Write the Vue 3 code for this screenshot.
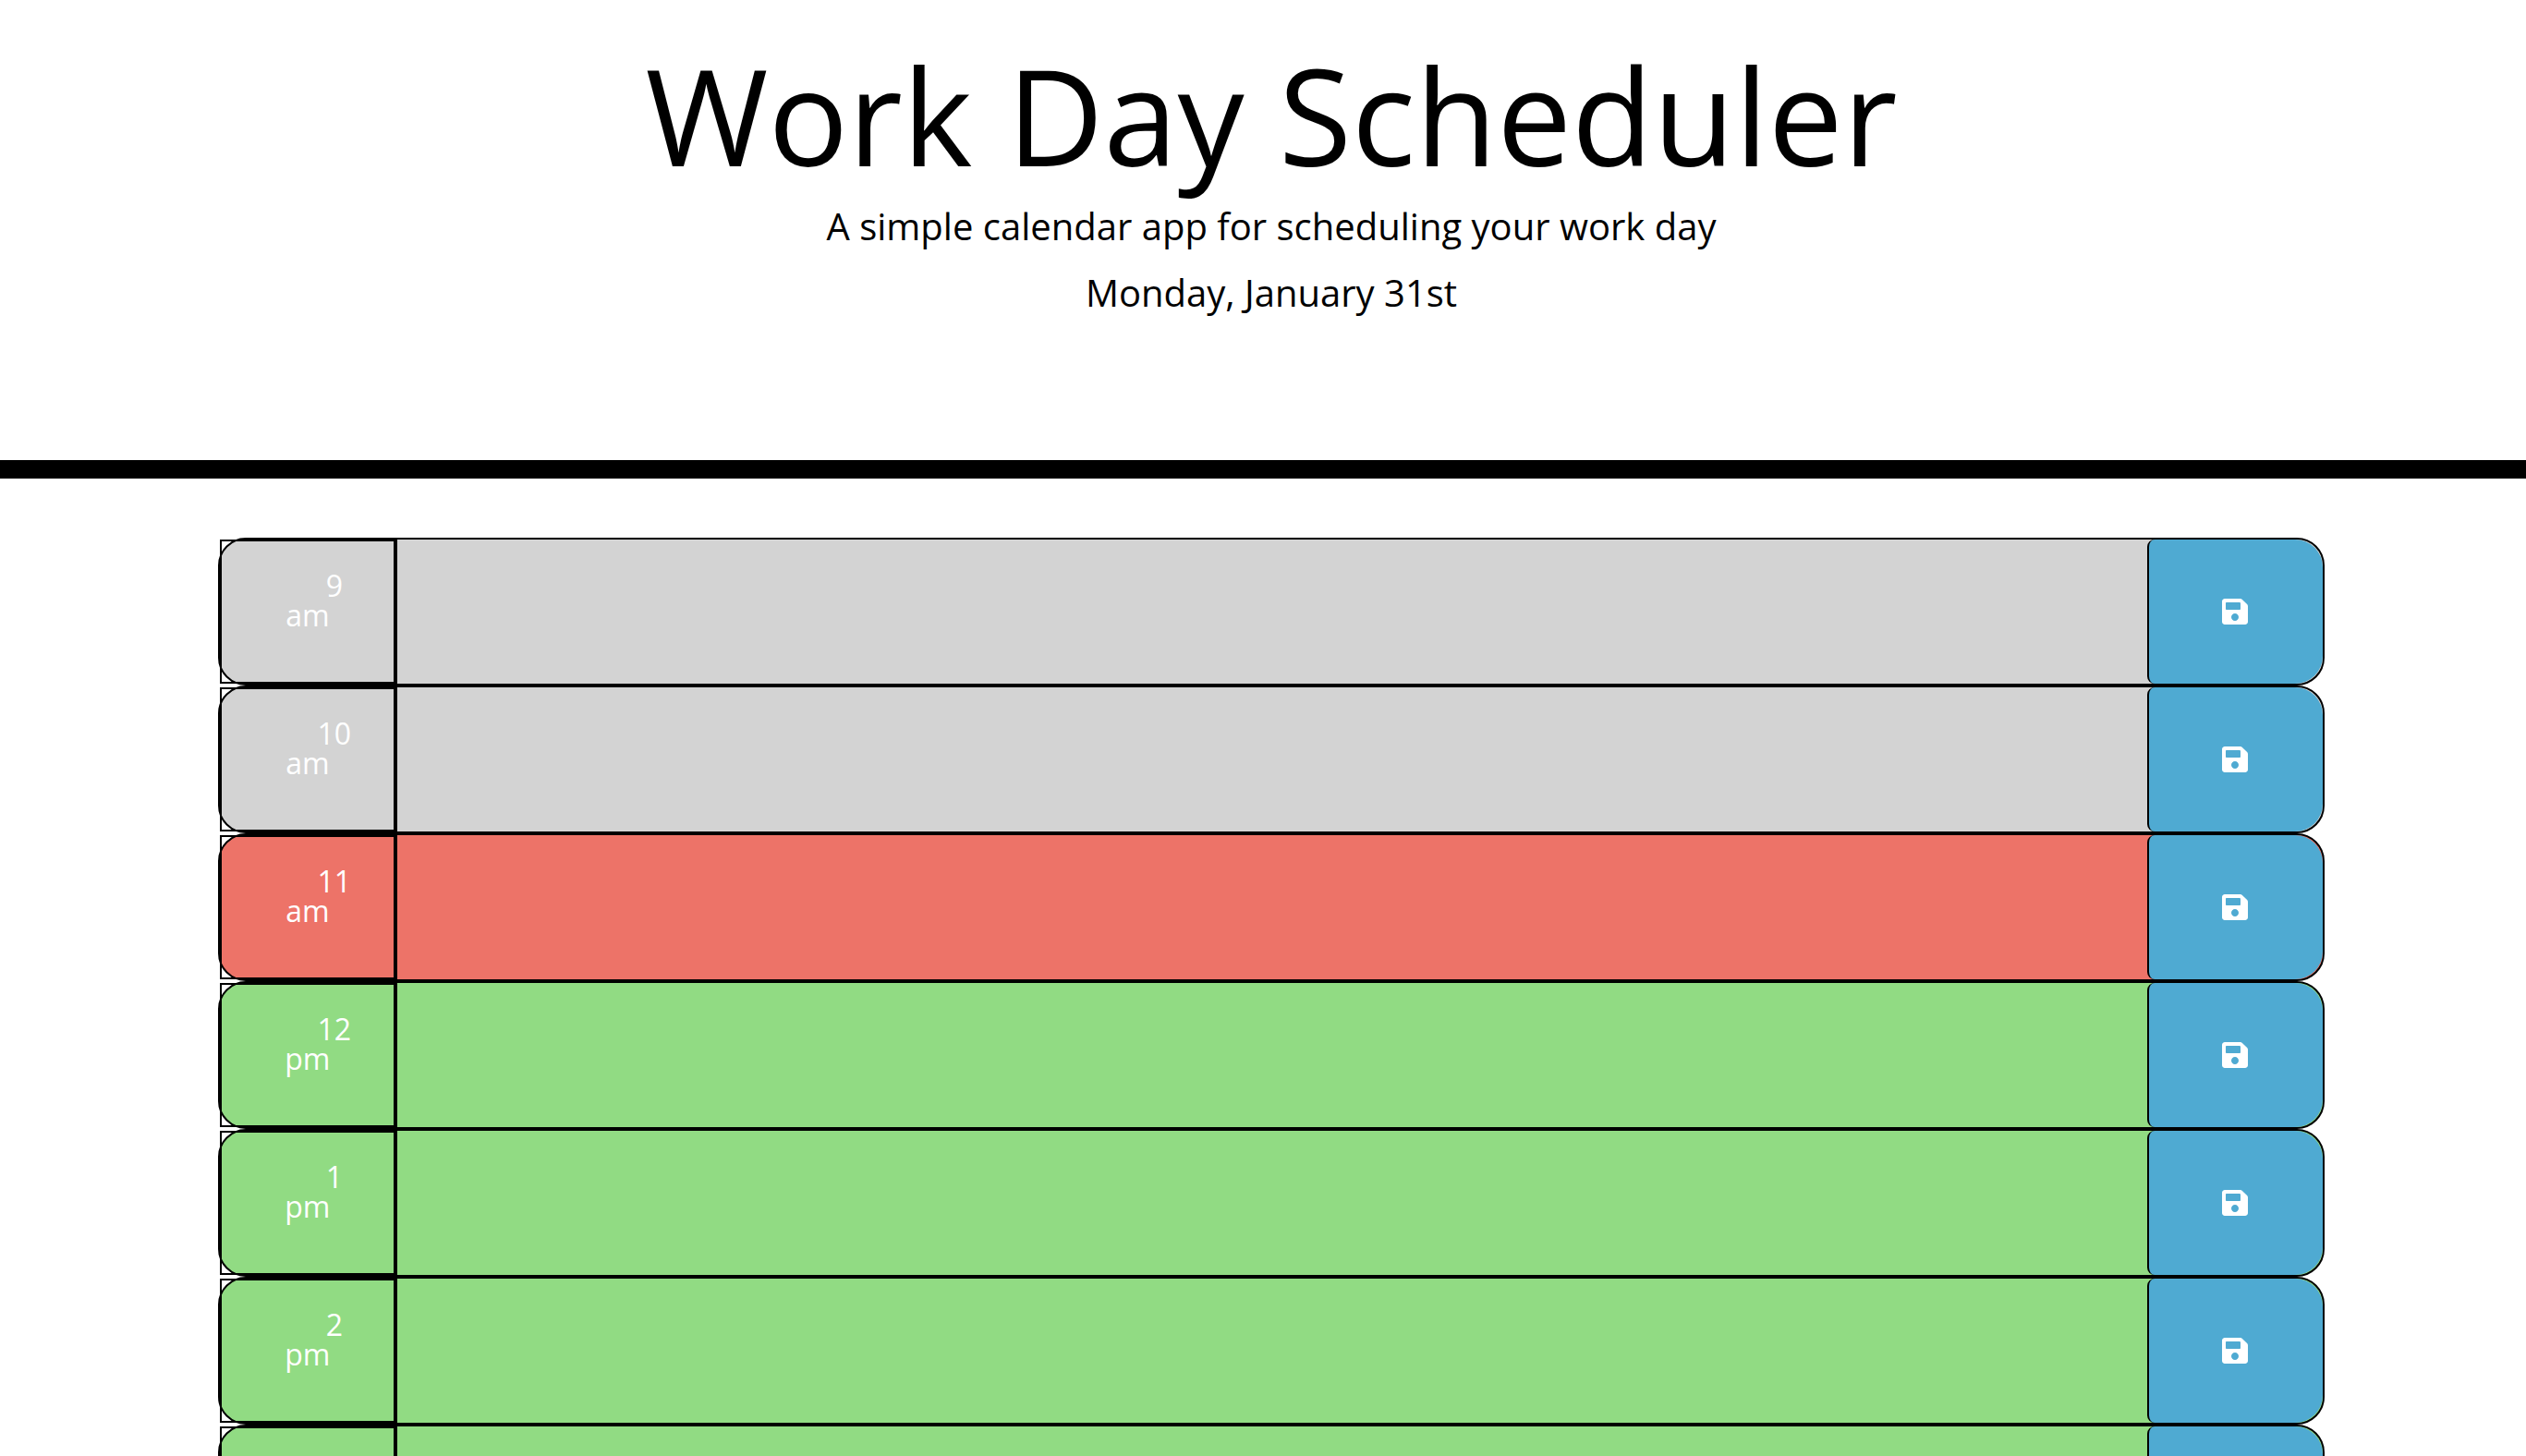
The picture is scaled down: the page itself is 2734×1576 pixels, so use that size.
<script setup>
import { ref } from 'vue'

const today = 'Monday, January 31st'

const slots = ref([
  { hour: 9, period: 'am', state: 'past', note: '' },
  { hour: 10, period: 'am', state: 'past', note: '' },
  { hour: 11, period: 'am', state: 'present', note: '' },
  { hour: 12, period: 'pm', state: 'future', note: '' },
  { hour: 1, period: 'pm', state: 'future', note: '' },
  { hour: 2, period: 'pm', state: 'future', note: '' },
  { hour: 3, period: 'pm', state: 'future', note: '' },
])
</script>

<template>
  <div class="page">
    <header class="jumbotron">
      <h1 class="title">Work Day Scheduler</h1>
      <p class="lead">A simple calendar app for scheduling your work day</p>
      <p class="lead">{{ today }}</p>
    </header>

    <main class="schedule">
      <form
        v-for="slot in slots"
        :key="slot.hour"
        class="time-block"
        :class="slot.state"
        @submit.prevent
      >
        <label class="hour" :for="`note-${slot.hour}`">{{ slot.hour }}<br />{{ slot.period }}</label>
        <textarea :id="`note-${slot.hour}`" v-model="slot.note" class="note"></textarea>
        <button class="save" type="submit" aria-label="Save">
          <svg class="icon" viewBox="0 0 448 512" aria-hidden="true">
            <path
              fill="currentColor"
              d="M433.941 129.941l-83.882-83.882A48 48 0 0 0 316.118 32H48C21.49 32 0 53.49 0 80v352c0 26.51 21.49 48 48 48h352c26.51 0 48-21.49 48-48V163.882a48 48 0 0 0-14.059-33.941zM224 416c-35.346 0-64-28.654-64-64 0-35.346 28.654-64 64-64s64 28.654 64 64c0 35.346-28.654 64-64 64zm96-304.52V212c0 6.627-5.373 12-12 12H76c-6.627 0-12-5.373-12-12V108c0-6.627 5.373-12 12-12h228.52c3.183 0 6.235 1.264 8.485 3.515l3.48 3.48A11.996 11.996 0 0 1 320 111.48z"
            />
          </svg>
        </button>
      </form>
    </main>
  </div>
</template>

<style>
html,
body {
  margin: 0;
  background: #fff;
}
</style>

<style scoped>
.page {
  height: 100vh;
  overflow: hidden;
  font-family: 'Open Sans', sans-serif;
  color: #000;
}

.page * {
  box-sizing: border-box;
}

.jumbotron {
  display: flex;
  flex-direction: column;
  gap: 24px;
  padding: 51px 0 157px 18px;
  border-bottom: 20px solid #000;
  text-align: center;
}

.title {
  margin: 0;
  font-size: 144px;
  font-weight: 400;
  line-height: 146px;
}

.lead {
  margin: 0;
  font-size: 40px;
  line-height: 48px;
}

.schedule {
  padding: 64px 0 0 18px;
}

.time-block {
  display: grid;
  grid-template-columns: 1fr 10fr 1fr;
  max-width: 2280px;
  height: 160px;
  margin: 0 auto;
  border: 2px solid #000;
  border-radius: 30px;
}

.past {
  background: #d3d3d3;
}

.present {
  background: #ed7368;
}

.future {
  background: #91db83;
}

.hour {
  padding-top: 32px;
  border: 2px solid #000;
  color: #fff;
  font-size: 32px;
  line-height: 32px;
  text-align: center;
  text-indent: 58px;
}

.note {
  width: 100%;
  height: 100%;
  margin: 0;
  padding: 8px;
  border: 0;
  border-left: 2px solid #000;
  outline: 0;
  background: transparent;
  color: #fff;
  font: inherit;
  font-size: 32px;
  resize: none;
}

.save {
  display: flex;
  align-items: center;
  justify-content: center;
  padding: 0 2px 0 0;
  border: 0;
  border-left: 2px solid #000;
  border-radius: 8px 30px 30px 8px;
  background: #4faad2;
  color: #fff;
  cursor: pointer;
}

.icon {
  width: 28px;
  height: 32px;
}
</style>
